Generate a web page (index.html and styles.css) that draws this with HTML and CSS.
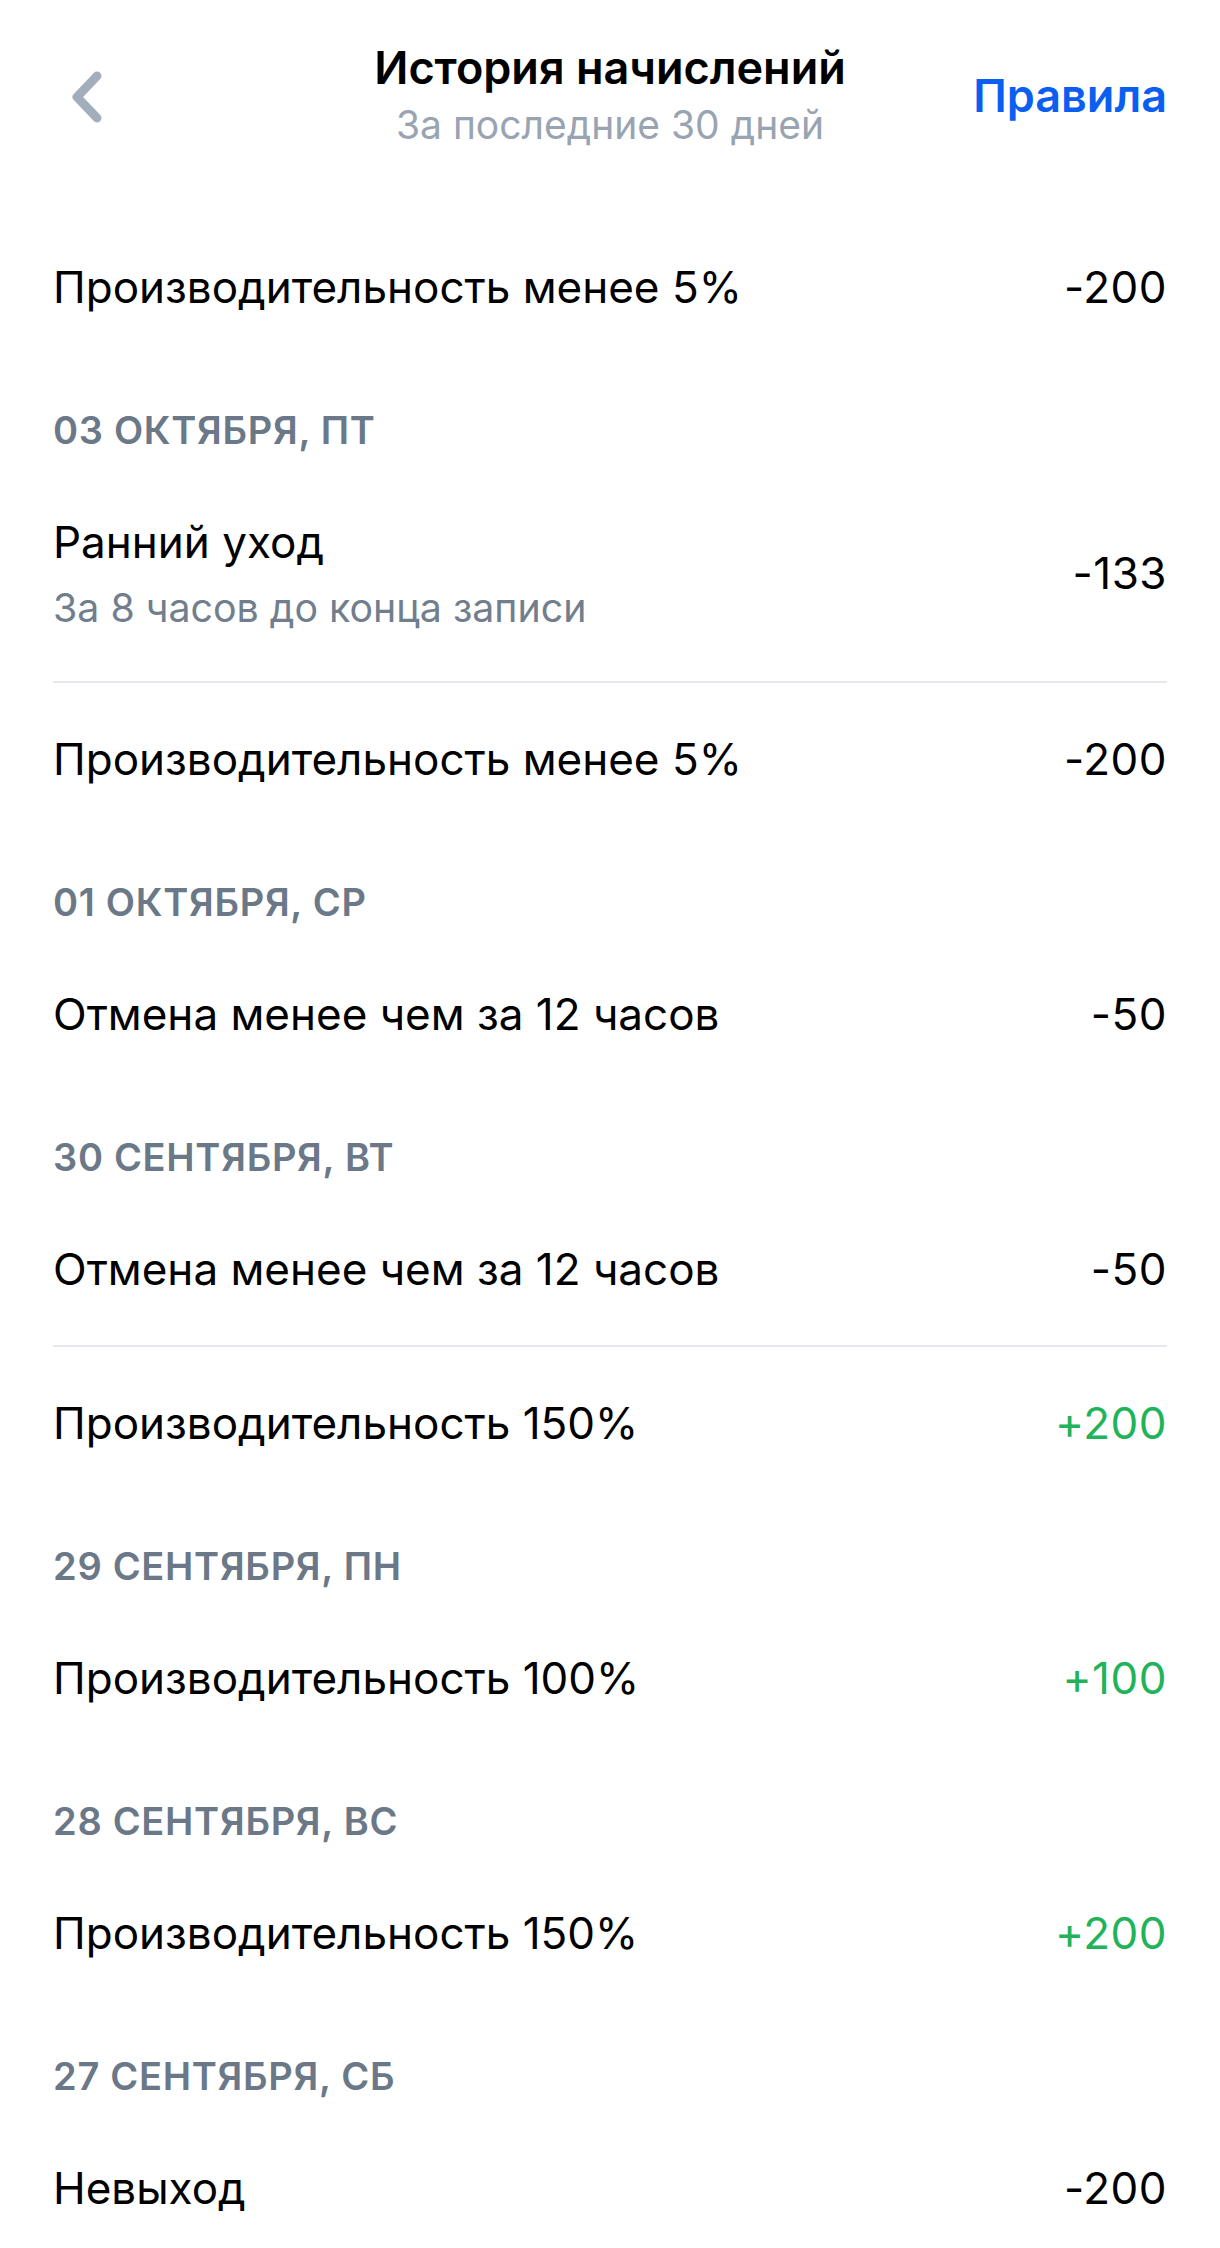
FILE: index.html
```html
<!DOCTYPE html>
<html lang="ru">
<head>
    <meta charset="UTF-8">
    <meta name="viewport" content="width=device-width, initial-scale=1.0">
    <title>История начислений</title>
    <link rel="stylesheet" href="styles.css">
</head>
<body>
    <!-- Top bar -->
    <div class="top-bar">
        <button class="back-button" aria-label="Назад">
            <svg width="34" height="54" viewBox="0 0 34 54">
                <path d="M27 6 L7 27 L27 48" fill="none" stroke="#a3aebc" stroke-width="9" stroke-linecap="round" stroke-linejoin="round"/>
            </svg>
        </button>
        <div class="top-title">
            <div class="title">История начислений</div>
            <div class="subtitle">За последние 30 дней</div>
        </div>
        <a class="rules-link" href="#">Правила</a>
    </div>

    <!-- History list -->
    <div class="history">
        <div class="entry">
            <div class="entry-name">Производительность менее 5%</div>
            <div class="entry-value">-200</div>
        </div>

        <div class="day">03 октября, пт</div>
        <div class="entry entry-tall">
            <div class="entry-text">
                <div class="entry-name">Ранний уход</div>
                <div class="entry-note">За 8 часов до конца записи</div>
            </div>
            <div class="entry-value">-133</div>
        </div>
        <div class="divider"></div>
        <div class="entry">
            <div class="entry-name">Производительность менее 5%</div>
            <div class="entry-value">-200</div>
        </div>

        <div class="day">01 октября, ср</div>
        <div class="entry">
            <div class="entry-name">Отмена менее чем за 12 часов</div>
            <div class="entry-value">-50</div>
        </div>

        <div class="day">30 сентября, вт</div>
        <div class="entry">
            <div class="entry-name">Отмена менее чем за 12 часов</div>
            <div class="entry-value">-50</div>
        </div>
        <div class="divider"></div>
        <div class="entry">
            <div class="entry-name">Производительность 150%</div>
            <div class="entry-value plus">+200</div>
        </div>

        <div class="day">29 сентября, пн</div>
        <div class="entry">
            <div class="entry-name">Производительность 100%</div>
            <div class="entry-value plus">+100</div>
        </div>

        <div class="day">28 сентября, вс</div>
        <div class="entry">
            <div class="entry-name">Производительность 150%</div>
            <div class="entry-value plus">+200</div>
        </div>

        <div class="day">27 сентября, сб</div>
        <div class="entry">
            <div class="entry-name">Невыход</div>
            <div class="entry-value">-200</div>
        </div>
    </div>
</body>
</html>
```

FILE: styles.css
```css
body {
    margin: 0;
    padding: 0;
    font-family: Inter, 'Noto Sans', sans-serif;
    background-color: #ffffff;
    color: #000000;
    overflow: hidden;
}
.top-bar {
    height: 211px;
    box-sizing: border-box;
    padding: 42px 53px 0 53px;
    display: grid;
    grid-template-columns: 1fr auto 1fr;
    align-items: start;
}
.back-button {
    justify-self: start;
    margin-top: 28px;
    margin-left: 17px;
    padding: 0;
    border: none;
    background: none;
    cursor: pointer;
}
.back-button svg {
    display: block;
}
.top-title {
    text-align: center;
}
.title {
    font-size: 45px;
    line-height: 52px;
    font-weight: 600;
}
.subtitle {
    margin-top: 6px;
    font-size: 39px;
    line-height: 50px;
    color: #99a4b2;
}
.rules-link {
    justify-self: end;
    margin-top: 29px;
    font-size: 45px;
    line-height: 50px;
    font-weight: 600;
    color: #0b5ff0;
    text-decoration: none;
}
.entry {
    display: flex;
    justify-content: space-between;
    align-items: center;
    padding: 50px 53px;
    font-size: 44px;
    line-height: 52px;
}
.entry-tall {
    padding-bottom: 51px;
}
.entry-note {
    margin-top: 18px;
    font-size: 39.3px;
    line-height: 44px;
    color: #717e8d;
}
.entry-value {
    white-space: nowrap;
    letter-spacing: 0.5px;
}
.entry-value.plus {
    color: #22b35a;
}
.divider {
    height: 2px;
    margin: 0 53px;
    background-color: #e5e9ee;
}
.day {
    padding: 45px 53px 14px 53px;
    font-size: 38px;
    line-height: 44px;
    font-weight: 600;
    letter-spacing: 0.7px;
    color: #6b7888;
    text-transform: uppercase;
}
```
